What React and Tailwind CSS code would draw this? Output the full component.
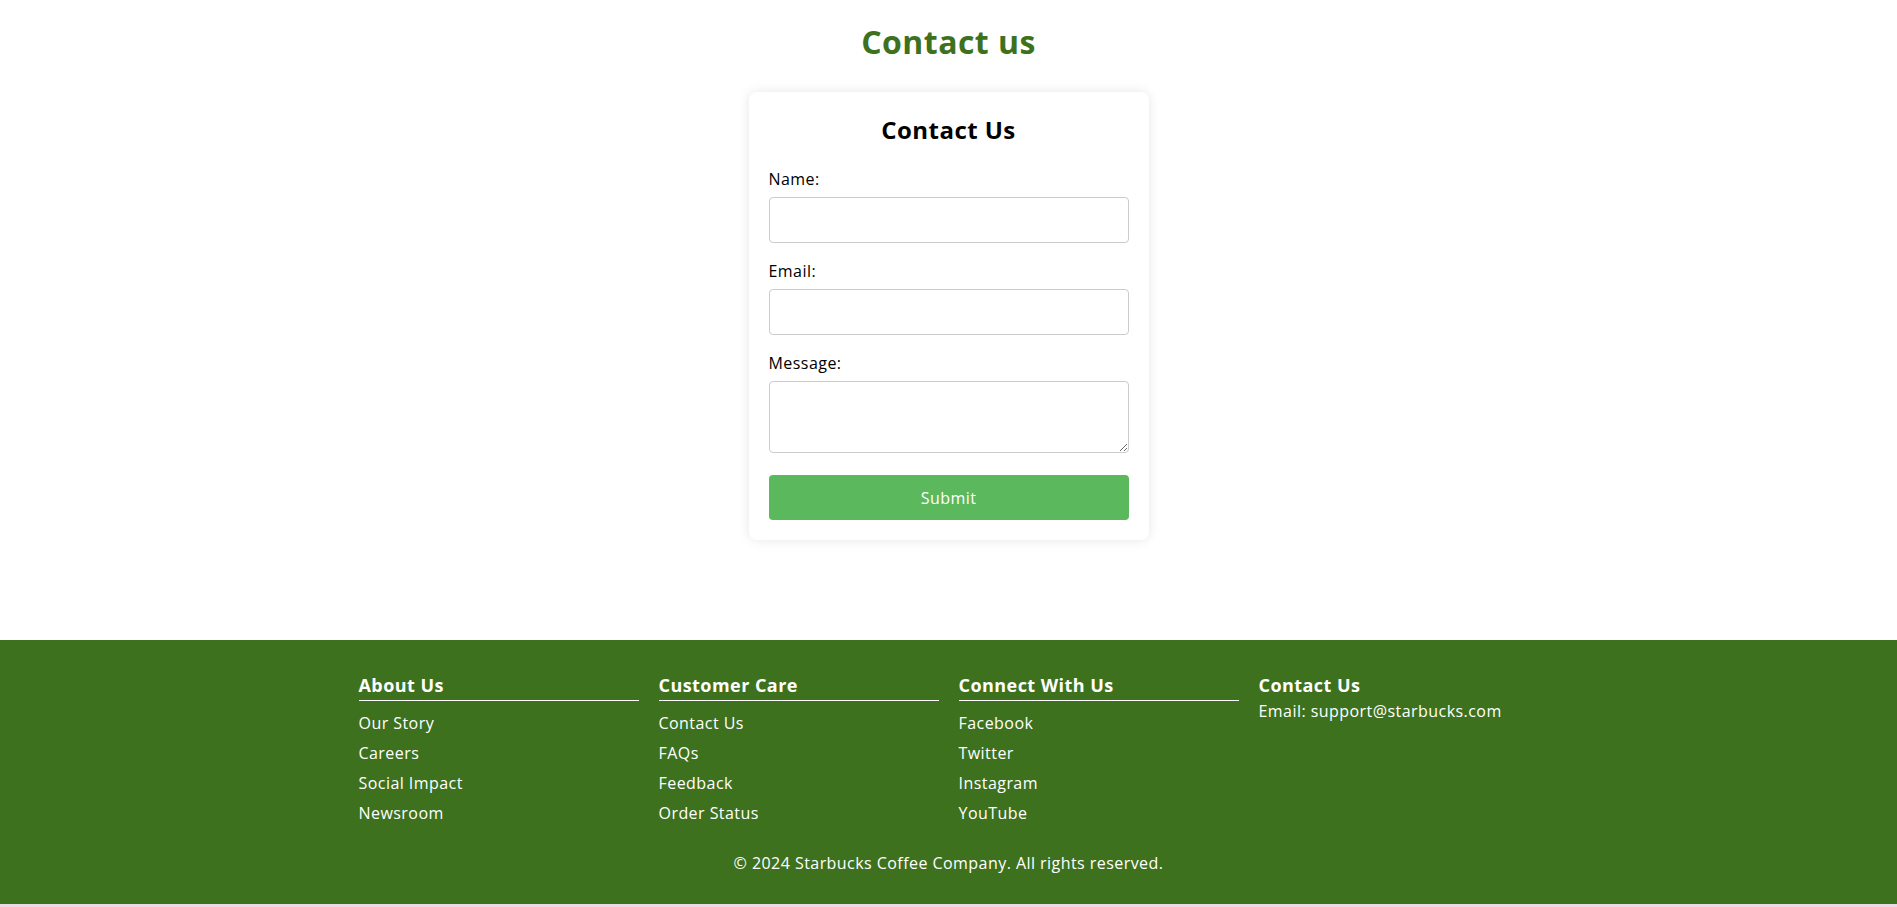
const footerCols = [
  { title: 'About Us', links: ['Our Story', 'Careers', 'Social Impact', 'Newsroom'] },
  { title: 'Customer Care', links: ['Contact Us', 'FAQs', 'Feedback', 'Order Status'] },
  { title: 'Connect With Us', links: ['Facebook', 'Twitter', 'Instagram', 'YouTube'] },
];

function Field({ label, children, last }) {
  return (
    <div className={last ? 'mb-[22px]' : 'mb-[16px]'}>
      <label className="block text-[16px] leading-[24px] text-black mb-[6px]">{label}</label>
      {children}
    </div>
  );
}

export default function App() {
  return (
    <div className="min-h-screen bg-[#e8dde6] font-['Open_Sans',sans-serif] tracking-[0.028em]">
      <main className="bg-white h-[640px] pt-[18px]">
        <h1 className="text-center text-[32px] leading-[48px] font-bold text-[#3d711e]">Contact us</h1>
        <div className="w-[400px] mx-auto mt-[26px] bg-white rounded-lg shadow-[0_0_12px_rgba(0,0,0,0.1)] p-5">
          <h2 className="text-center text-[24px] leading-[36px] font-bold text-black mb-[19px]">Contact Us</h2>
          <Field label="Name:">
            <input type="text" className="block w-full h-[46px] border border-[#ccc] rounded px-2.5" />
          </Field>
          <Field label="Email:">
            <input type="email" className="block w-full h-[46px] border border-[#ccc] rounded px-2.5" />
          </Field>
          <Field label="Message:" last>
            <textarea className="block w-full h-[72px] border border-[#ccc] rounded px-2.5" />
          </Field>
          <button className="w-full h-[45px] rounded bg-[#5cb85c] text-white text-[16px]">Submit</button>
        </div>
      </main>
      <footer className="bg-[#3d711e] text-white h-[264px] pt-[32px]">
        <div className="max-w-[1200px] mx-auto flex">
          {footerCols.map((col) => (
            <div key={col.title} className="flex-1 px-2.5">
              <h3 className="text-[18px] leading-[26px] font-bold border-b border-white pb-[2px] mb-[7px]">{col.title}</h3>
              <ul>
                {col.links.map((l) => (
                  <li key={l} className="text-[16px] leading-[30px]">{l}</li>
                ))}
              </ul>
            </div>
          ))}
          <div className="flex-1 px-2.5">
            <h3 className="text-[18px] leading-[26px] font-bold">Contact Us</h3>
            <p className="text-[16px] leading-[24px] mt-[1px]">Email: support@starbucks.com</p>
          </div>
        </div>
        <p className="text-center text-[16px] leading-[24px] mt-[23px]">© 2024 Starbucks Coffee Company. All rights reserved.</p>
      </footer>
    </div>
  );
}
